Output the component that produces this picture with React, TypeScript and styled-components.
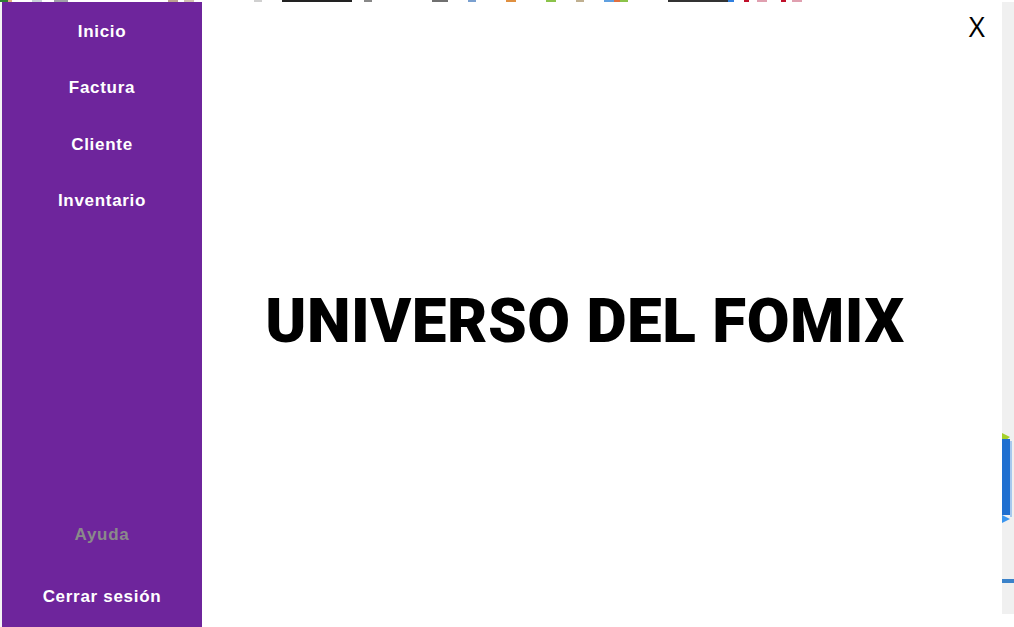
import React from "react";
import styled, { createGlobalStyle } from "styled-components";

const Global = createGlobalStyle`
  html, body { margin: 0; padding: 0; background: #ffffff; overflow: hidden; }
  * { box-sizing: border-box; }
`;

const Desktop = styled.div`
  width: 1014px;
  height: 627px;
  display: flex;
  flex-direction: column;
  background: #ffffff;
  overflow: hidden;
`;

const TopStrip = styled.div`
  height: 2px;
  display: flex;
  flex-shrink: 0;
`;

const Speck = styled.span<{ $w: number; $c: string }>`
  width: ${(p) => p.$w}px;
  height: 2px;
  background: ${(p) => p.$c};
  flex-shrink: 0;
`;

const Row = styled.div`
  flex: 1;
  display: flex;
  min-height: 0;
`;

const LeftStrip = styled.div`
  width: 2px;
  flex-shrink: 0;
  background: #f4f4f4;
`;

const Window = styled.div`
  width: 1000px;
  height: 625px;
  display: flex;
  flex-shrink: 0;
  overflow: hidden;
`;

const Sidebar = styled.nav`
  width: 200px;
  background: #6e259c;
  display: flex;
  flex-direction: column;
  padding-top: 1px;
`;

const NavGroup = styled.div<{ $bottom?: boolean }>`
  display: flex;
  flex-direction: column;
  margin-top: ${(p) => (p.$bottom ? "auto" : "0")};
  margin-bottom: ${(p) => (p.$bottom ? "-1px" : "0")};
`;

const NavItem = styled.div<{ $h: number; $muted?: boolean }>`
  height: ${(p) => p.$h}px;
  flex-shrink: 0;
  display: flex;
  align-items: center;
  justify-content: center;
  font-family: "Liberation Sans", Arial, sans-serif;
  font-weight: 700;
  font-size: 17px;
  letter-spacing: 0.7px;
  color: ${(p) => (p.$muted ? "#8a8a8a" : "#ffffff")};
`;

const Main = styled.main`
  flex: 1;
  position: relative;
  background: #ffffff;
  display: flex;
  align-items: center;
  justify-content: center;
  padding-right: 34px;
  padding-top: 12px;
`;

const Title = styled.h1`
  margin: 0;
  font-family: Roboto, "Liberation Sans", sans-serif;
  font-weight: 900;
  font-size: 62px;
  letter-spacing: 0.5px;
  color: #000000;
`;

const Close = styled.div`
  position: absolute;
  top: 10px;
  right: 17px;
  font-family: "Open Sans", "DejaVu Sans", sans-serif;
  font-weight: 400;
  font-size: 28px;
  color: #000000;
  line-height: 1;
`;

const RightStrip = styled.div`
  width: 12px;
  height: 612px;
  flex-shrink: 0;
  background: #f0f0f0;
  display: flex;
  flex-direction: column;
`;

const Gap = styled.div<{ $h: number }>`
  height: ${(p) => p.$h}px;
  flex-shrink: 0;
`;

const Line = styled.div`
  height: 4px;
  background: #3b82c9;
`;

const TopSpecks: [number, string][] = [
  [8, "#2f7d32"], [4, "#e0b080"], [20, "#ffffff"], [10, "#c8d0d8"], [12, "#ffffff"],
  [14, "#a0a0a8"], [100, "#ffffff"], [10, "#bba090"], [6, "#ffffff"], [10, "#d0c0b0"],
  [60, "#ffffff"], [8, "#d0d0d0"], [20, "#ffffff"], [70, "#222222"], [12, "#ffffff"],
  [8, "#888888"], [60, "#ffffff"], [16, "#707070"], [20, "#ffffff"], [8, "#7aa0d0"],
  [30, "#ffffff"], [10, "#e09040"], [30, "#ffffff"], [10, "#8bc34a"], [20, "#ffffff"],
  [8, "#c0b090"], [20, "#ffffff"], [10, "#60a0e0"], [6, "#e07040"], [8, "#8bc34a"],
  [40, "#ffffff"], [60, "#333333"], [6, "#3080e0"], [10, "#ffffff"], [5, "#c0102a"],
  [8, "#ffffff"], [10, "#e0a0b0"], [14, "#ffffff"], [5, "#c0102a"], [6, "#ffffff"],
  [10, "#e0a0b0"],
];

export default function App() {
  return (
    <>
      <Global />
      <Desktop>
        <TopStrip>
          {TopSpecks.map(([w, c], i) => (
            <Speck key={i} $w={w} $c={c} />
          ))}
        </TopStrip>
        <Row>
          <LeftStrip />
          <Window>
            <Sidebar>
              <NavGroup>
                <NavItem $h={57}>Inicio</NavItem>
                <NavItem $h={56}>Factura</NavItem>
                <NavItem $h={57}>Cliente</NavItem>
                <NavItem $h={56}>Inventario</NavItem>
              </NavGroup>
              <NavGroup $bottom>
                <NavItem $h={62} $muted>Ayuda</NavItem>
                <NavItem $h={62}>Cerrar sesión</NavItem>
              </NavGroup>
            </Sidebar>
            <Main>
              <Title>UNIVERSO DEL FOMIX</Title>
              <Close>X</Close>
            </Main>
          </Window>
          <RightStrip>
            <Gap $h={431} />
            <svg width="12" height="95" viewBox="0 0 12 95">
              <polygon points="0,0 8,4 0,10" fill="#a6d12a" />
              <rect x="0" y="6" width="8" height="76" fill="#1f6fd0" />
              <rect x="8" y="8" width="2" height="76" fill="#a8c8ee" />
              <polygon points="0,82 8,86 0,90" fill="#3a95ee" />
            </svg>
            <Gap $h={51} />
            <Line />
          </RightStrip>
        </Row>
      </Desktop>
    </>
  );
}
